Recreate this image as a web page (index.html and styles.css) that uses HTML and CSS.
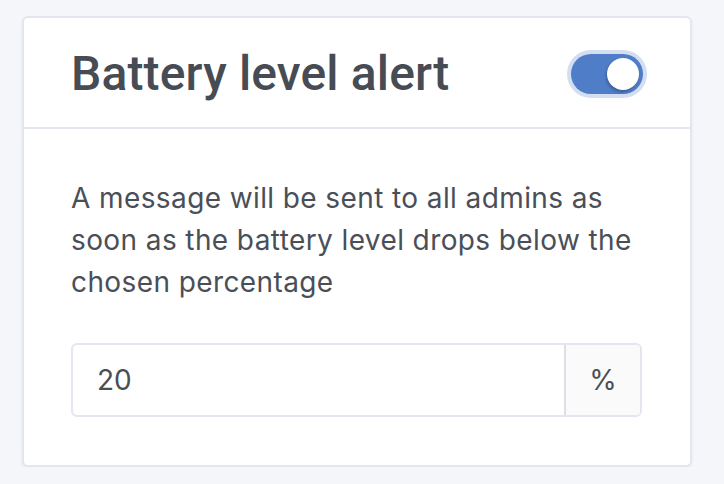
FILE: index.html
```html
<!DOCTYPE html>
<html>
<head>
<meta charset="utf-8">
<link rel="stylesheet" href="styles.css">
</head>
<body>
<div class="card">
  <div class="card-header">
    <h1 class="title">Battery level alert</h1>
    <div class="toggle"><div class="knob"></div></div>
  </div>
  <div class="card-body">
    <p class="desc">A message will be sent to all admins as soon as the battery level drops below the chosen percentage</p>
    <div class="input-group">
      <div class="input">20</div>
      <div class="suffix">%</div>
    </div>
  </div>
</div>
</body>
</html>
```
FILE: styles.css
```css
html, body {
  margin: 0;
  padding: 0;
  background: #f5f6fa;
}
body {
  padding: 16px 32px 0 22px;
  font-family: Inter, Roboto, "Liberation Sans", sans-serif;
  color: #4a4f57;
}
.card {
  width: 670px;
  box-sizing: border-box;
  background: #ffffff;
  border: 2px solid #e3e6ee;
  border-radius: 6px;
  box-shadow: 0 2px 3px rgba(30, 40, 70, 0.06);
}
.card-header {
  display: flex;
  align-items: center;
  justify-content: space-between;
  height: 111px;
  box-sizing: border-box;
  padding: 2px 47px 0 47px;
  border-bottom: 2px solid #e3e6ee;
}
.title {
  margin: 0;
  font-family: Roboto, "Liberation Sans", sans-serif;
  font-size: 48px;
  font-weight: 500;
  letter-spacing: 0.15px;
  color: #474c54;
  line-height: 1;
}
.toggle {
  width: 72px;
  height: 40px;
  border-radius: 20px;
  background: #507dc8;
  box-shadow: 0 0 0 4px #d4def1;
  position: relative;
}
.knob {
  position: absolute;
  right: 4px;
  top: 4px;
  width: 32px;
  height: 32px;
  border-radius: 50%;
  background: #ffffff;
  box-shadow: -1px 2px 3px rgba(0, 0, 0, 0.25);
}
.card-body {
  padding: 48px 48px 48px 47px;
}
.desc {
  margin: 0 0 40px 0;
  font-size: 28px;
  line-height: 42px;
  letter-spacing: 0.4px;
  color: #4a4f57;
}
.input-group {
  display: flex;
  height: 74px;
  box-sizing: border-box;
  border: 2px solid #e3e6ee;
  border-radius: 6px;
  width: 571px;
  overflow: hidden;
}
.input {
  flex: 1;
  display: flex;
  align-items: center;
  padding-left: 24px;
  font-size: 28px;
  color: #4a4f57;
}
.suffix {
  width: 74px;
  display: flex;
  align-items: center;
  justify-content: center;
  background: #fafafb;
  border-left: 2px solid #dcdfe6;
  font-size: 28px;
  color: #4a4f57;
}
```
